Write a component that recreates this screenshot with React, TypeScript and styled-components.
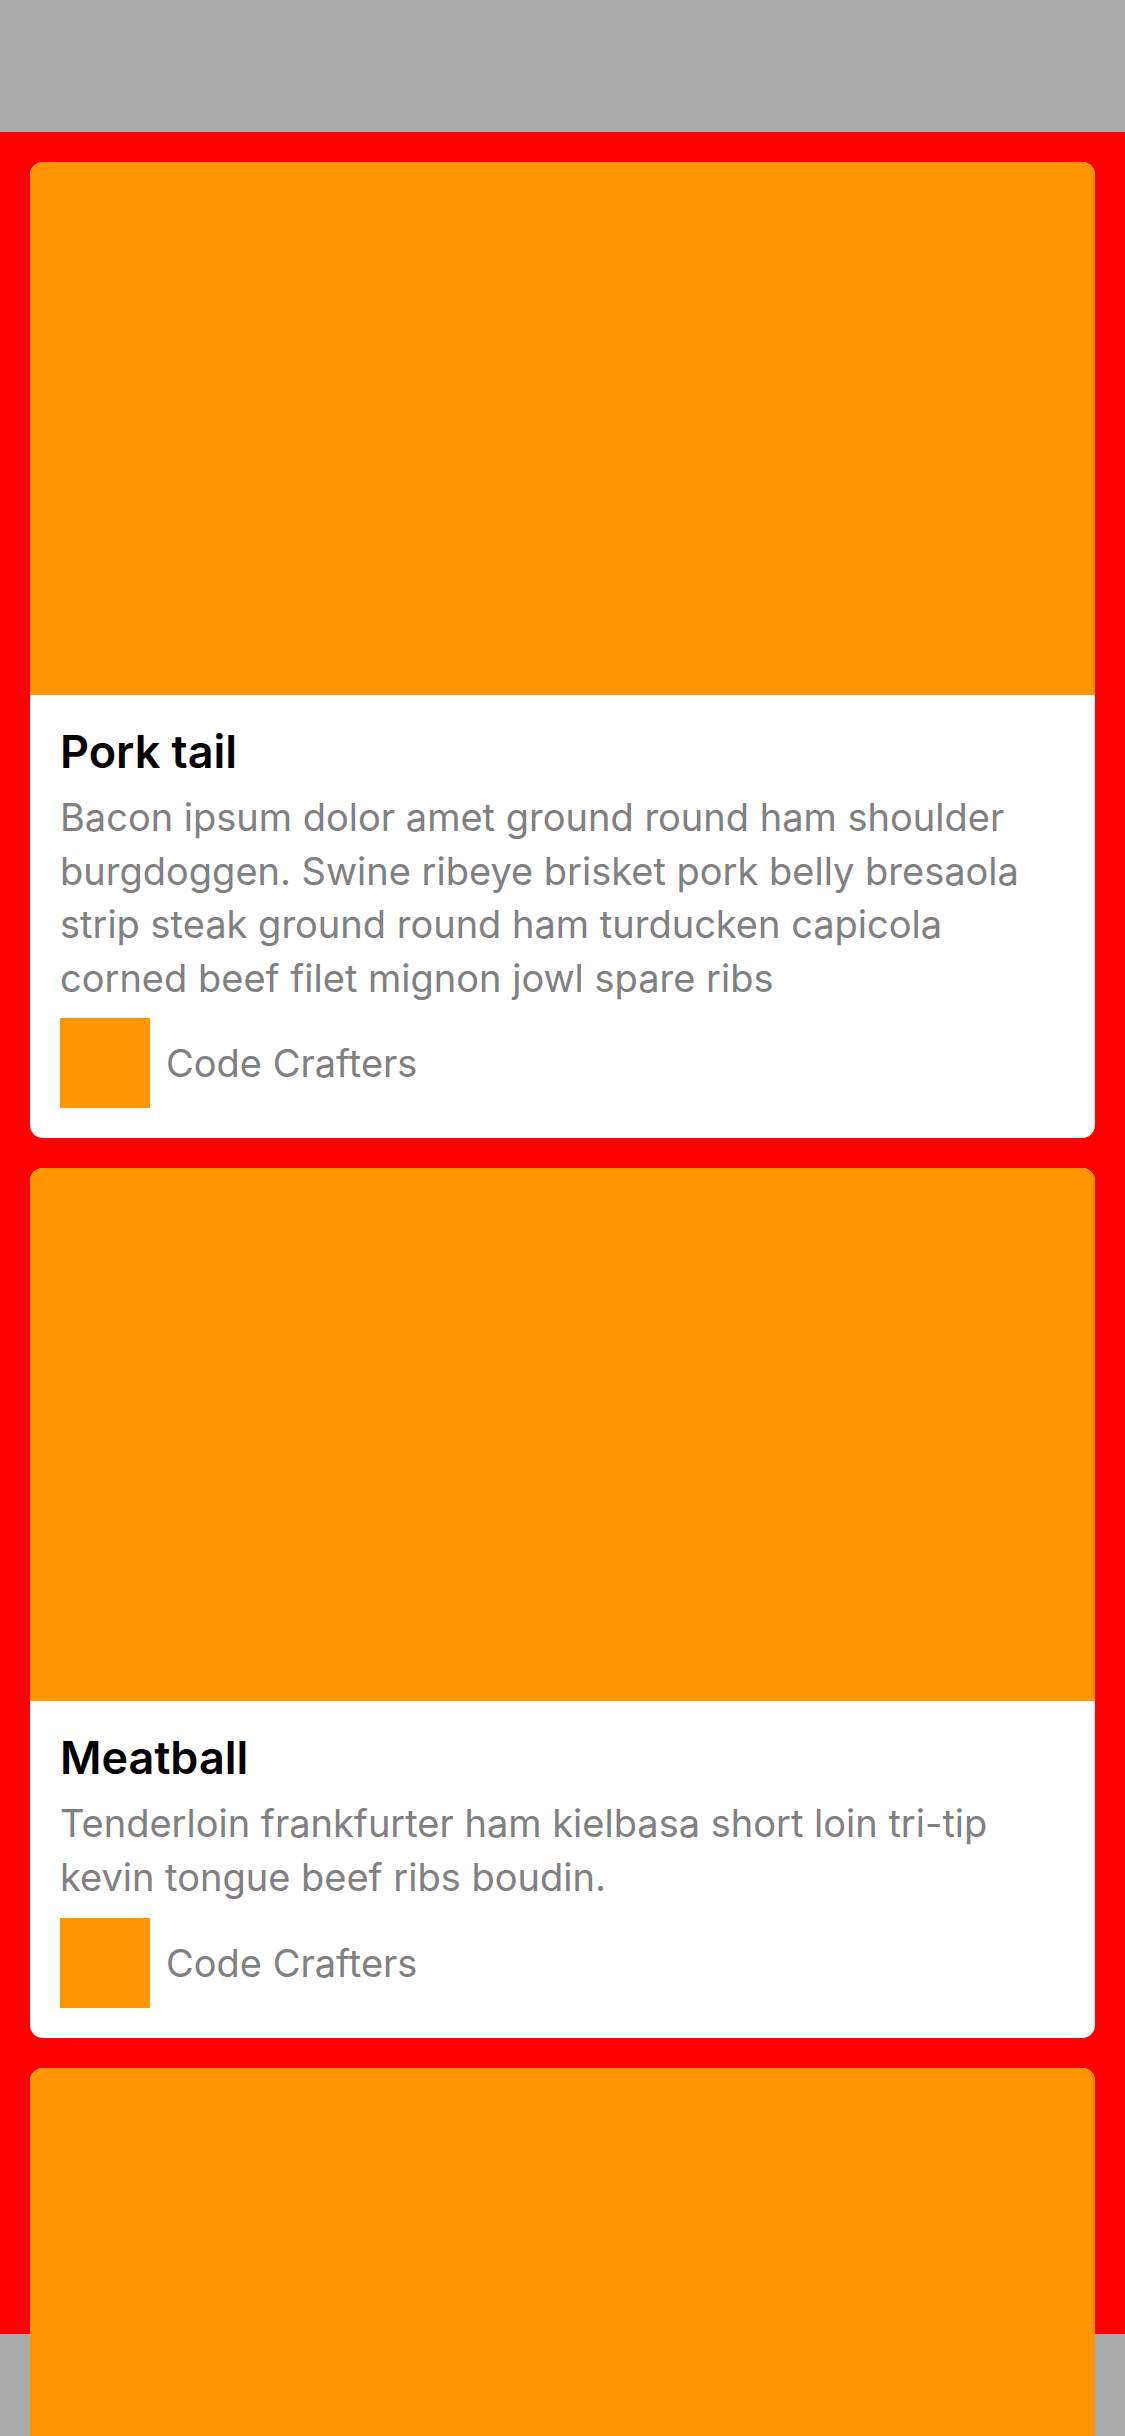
import React from "react";
import styled, { createGlobalStyle } from "styled-components";

const Global = createGlobalStyle`
  html, body {
    margin: 0;
    padding: 0;
    width: 1125px;
    height: 2436px;
    overflow: hidden;
    background: #aaaaaa;
  }
  * { box-sizing: border-box; }
`;

const Screen = styled.div`
  width: 1125px;
  height: 2436px;
  display: flex;
  flex-direction: column;
  background: #aaaaaa;
  font-family: Inter, "Noto Sans", "Liberation Sans", sans-serif;
`;

const TopBar = styled.div`
  height: 132px;
  flex: none;
  background: #aaaaaa;
`;

const Feed = styled.div`
  position: relative;
  z-index: 1;
  flex: 1;
  min-height: 0;
  background: #ff0000;
  padding: 30px;
  display: flex;
  flex-direction: column;
  gap: 30px;
`;

const BottomBar = styled.div`
  height: 102px;
  flex: none;
  background: #aaaaaa;
`;

const Card = styled.div`
  flex: none;
  background: #ffffff;
  border-radius: 13px;
  overflow: hidden;
  display: flex;
  flex-direction: column;
`;

const Cover = styled.div`
  height: 533px;
  background: #ff9500;
`;

const Body = styled.div`
  padding: 30px 30px 30px;
  display: flex;
  flex-direction: column;
`;

const Title = styled.div`
  font-size: 45px;
  line-height: 54px;
  font-weight: 600;
  color: #000000;
`;

const Description = styled.div`
  margin-top: 12px;
  font-size: 38px;
  line-height: 53.6px;
  color: #808080;
`;

const Author = styled.div`
  margin-top: 13px;
  display: flex;
  align-items: center;
  gap: 16px;
`;

const Avatar = styled.div`
  width: 90px;
  height: 90px;
  flex: none;
  background: #ff9500;
`;

const AuthorName = styled.div`
  font-size: 38px;
  color: #808080;
`;

const posts = [
  {
    title: "Pork tail",
    text: "Bacon ipsum dolor amet ground round ham shoulder burgdoggen. Swine ribeye brisket pork belly bresaola strip steak ground round ham turducken capicola corned beef filet mignon jowl spare ribs",
  },
  {
    title: "Meatball",
    text: "Tenderloin frankfurter ham kielbasa short loin tri-tip kevin tongue beef ribs boudin.",
  },
  {
    title: "Brisket",
    text: "Short ribs pastrami beef ribs, picanha chuck shankle jerky.",
  },
];

export default function App() {
  return (
    <>
      <Global />
      <Screen>
        <TopBar />
        <Feed>
          {posts.map((p) => (
            <Card key={p.title}>
              <Cover />
              <Body>
                <Title>{p.title}</Title>
                <Description>{p.text}</Description>
                <Author>
                  <Avatar />
                  <AuthorName>Code Crafters</AuthorName>
                </Author>
              </Body>
            </Card>
          ))}
        </Feed>
        <BottomBar />
      </Screen>
    </>
  );
}
